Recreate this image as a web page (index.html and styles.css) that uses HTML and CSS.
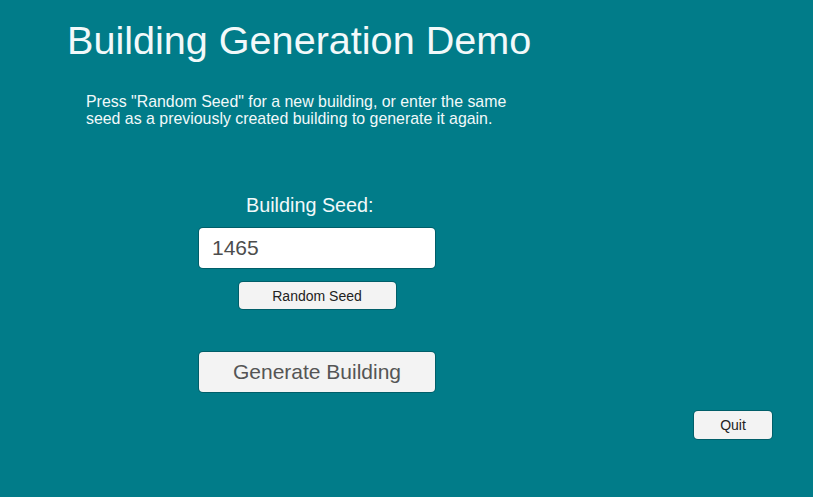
FILE: index.html
```html
<!DOCTYPE html>
<html lang="en">
<head>
	<title>Building Generation Demo</title>
	<meta charset="utf-8">
	<meta name="viewport" content="width=device-width, initial-scale=1">

	<link rel="stylesheet" href="styles.css">
</head>

<body>
	<h1 class="title">Building Generation Demo</h1>

	<p class="intro">Press "Random Seed" for a new building, or enter the same seed as a previously created building to generate it again.</p>

	<div class="seed-form">
		<label class="seed-label" for="seed">Building Seed:</label>
		<input class="seed-input" id="seed" type="text" value="1465">
		<button class="btn random">Random Seed</button>
		<button class="btn generate">Generate Building</button>
	</div>

	<div class="footer">
		<button class="btn quit">Quit</button>
	</div>

	<script type="text/javascript">
		const seedInput = document.querySelector('#seed');

		document.querySelector('.random').addEventListener('click', () => {
			seedInput.value = Math.floor(Math.random() * 10000);
		});
	</script>
</body>

</html>
```

FILE: styles.css
```css
body {
	margin: 0;
	padding: 0;
	height: 100vh;
	font-family: "Liberation Sans", Arial, sans-serif;
	background: #017c89;
	color: #f2f9fa;
	display: flex;
	flex-direction: column;
	overflow: hidden;
}
.title {
	margin: 20px 0 0 67px;
	font-size: 39.6px;
	font-weight: normal;
	line-height: 40px;
}
.intro {
	margin: 33px 0 0 86px;
	width: 440px;
	font-size: 15.9px;
	line-height: 17px;
}
.seed-form {
	display: flex;
	flex-direction: column;
	width: 236px;
	margin: 66px 0 0 199px;
}
.seed-label {
	padding-left: 47px;
	font-size: 19.8px;
	line-height: 24px;
}
.seed-input {
	margin-top: 11px;
	height: 40px;
	box-sizing: border-box;
	padding: 0 13px;
	border: none;
	border-radius: 4px;
	background: #fff;
	box-shadow: 0 0 0 1px rgba(0, 40, 45, 0.35);
	font-family: inherit;
	font-size: 21px;
	color: #4d4d4d;
	outline: none;
}
.btn {
	box-sizing: border-box;
	border: none;
	border-radius: 4px;
	background: #f3f3f3;
	box-shadow: 0 0 0 1px rgba(0, 40, 45, 0.35);
	font-family: inherit;
	font-size: 14px;
	color: #222;
	padding: 0;
	cursor: pointer;
}
.btn:hover {
	background: #fff;
}
.random {
	align-self: center;
	width: 157px;
	height: 27px;
	margin-top: 14px;
}
.generate {
	height: 40px;
	margin-top: 43px;
	font-size: 21px;
	color: #555;
}
.footer {
	display: flex;
	justify-content: flex-end;
	margin-top: 19px;
	padding-right: 41px;
}
.quit {
	width: 78px;
	height: 28px;
}
```
